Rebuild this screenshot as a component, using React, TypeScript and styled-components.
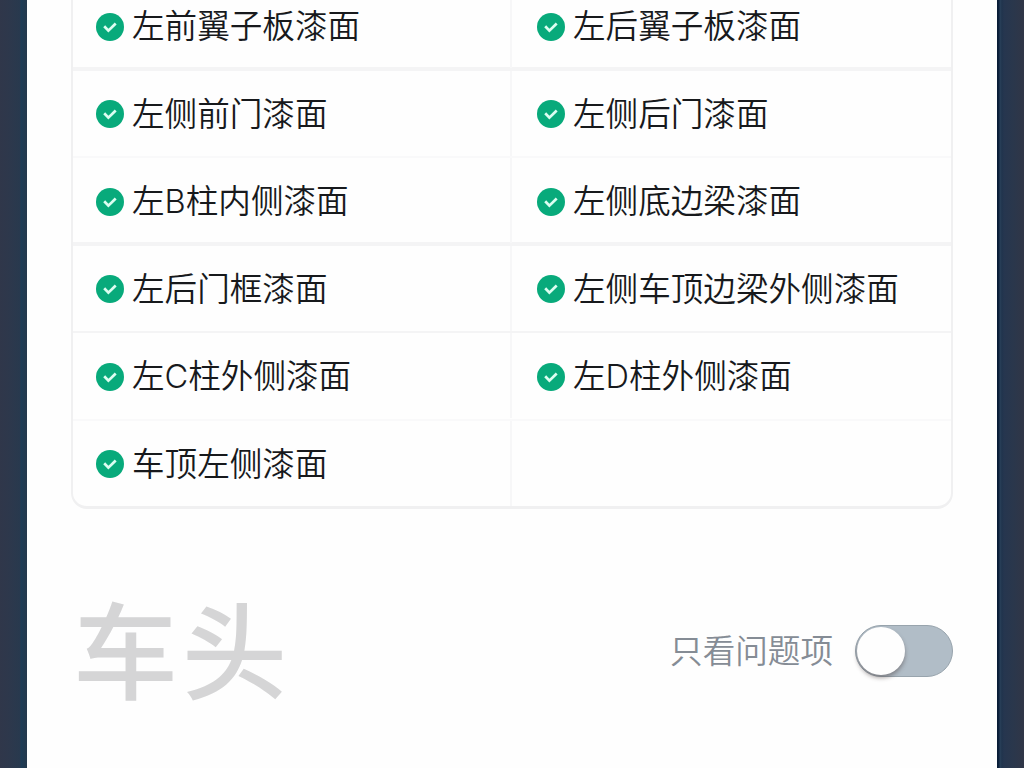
import styled, { createGlobalStyle, css } from 'styled-components'

type Item = {
  left: string
  right?: string
  divider?: 'thick' | 'thin' | 'faint'
}

const items: Item[] = [
  { left: '左前翼子板漆面', right: '左后翼子板漆面', divider: 'thick' },
  { left: '左侧前门漆面', right: '左侧后门漆面', divider: 'faint' },
  { left: '左B柱内侧漆面', right: '左侧底边梁漆面', divider: 'thick' },
  { left: '左后门框漆面', right: '左侧车顶边梁外侧漆面', divider: 'thin' },
  { left: '左C柱外侧漆面', right: '左D柱外侧漆面', divider: 'faint' },
  { left: '车顶左侧漆面' },
]

const Check = () => (
  <CheckIcon viewBox="0 0 28 28">
    <circle cx="14" cy="14" r="14" fill="#08aa7b" />
    <path d="M8.2 13.2l4.2 4.4 7.3-7.1" fill="none" stroke="#dcfdf1" strokeWidth="2.7" />
  </CheckIcon>
)

export default function App() {
  return (
    <Page>
      <GlobalStyle />
      <LeftEdge />
      <Sheet>
        <Table>
          {items.map(item => (
            <Row key={item.left} divider={item.divider}>
              <Cell>
                <Check />
                <Label>{item.left}</Label>
              </Cell>
              <Cell>
                {item.right && (
                  <>
                    <Check />
                    <Label>{item.right}</Label>
                  </>
                )}
              </Cell>
            </Row>
          ))}
        </Table>
        <Footer>
          <Title>车头</Title>
          <Filter>
            <FilterLabel>只看问题项</FilterLabel>
            <Switch role="switch" aria-checked="false">
              <Thumb />
            </Switch>
          </Filter>
        </Footer>
      </Sheet>
      <RightEdge />
    </Page>
  )
}

const GlobalStyle = createGlobalStyle`
  * {
    box-sizing: border-box;
  }
  body {
    margin: 0;
    overflow: hidden;
    font-family: Inter, 'Noto Sans CJK SC', sans-serif;
  }
`

const Page = styled.div`
  display: flex;
  width: 1024px;
  height: 768px;
  overflow: hidden;
  background: #fefefe;
`
const LeftEdge = styled.div`
  width: 27px;
  flex-shrink: 0;
  background: linear-gradient(90deg, #30374a 0, #2d384c 10px, #28394e 20px, #1d3c56 21px, #24394c 27px);
`
const RightEdge = styled.div`
  width: 27px;
  flex-shrink: 0;
  background: linear-gradient(90deg, #071a33 0, #0d2340 2px, #294059 3px, #20344d 5px, #26364f 7px, #2a374c 16px, #303647 27px);
`
const Sheet = styled.div`
  flex: 1;
  padding: 0 44px;
`
const Table = styled.div`
  margin-top: -19px;
  height: 528px;
  display: flex;
  flex-direction: column;
  border: 2px solid #f0f0f1;
  border-bottom-width: 3px;
  border-radius: 16px;
`

const Row = styled.div<{ divider?: Item['divider'] }>`
  display: flex;
  height: 87.6px;
  flex-shrink: 0;

  &:last-child {
    height: 85px;
  }

  ${props =>
    props.divider === 'thick' &&
    css`
      border-bottom: 4px solid #f4f4f5;
    `}

  ${props =>
    props.divider === 'thin' &&
    css`
      border-bottom: 2px solid #f4f4f5;
    `}

  ${props =>
    props.divider === 'faint' &&
    css`
      border-bottom: 2px solid #f9f9fa;
    `}
`
const Cell = styled.div`
  width: 437px;
  height: 85px;
  display: flex;
  align-items: center;
  gap: 8px;
  padding: 2px 0 0 23px;

  & + & {
    width: auto;
    flex: 1;
    border-left: 2px solid #f7f7f8;
    padding-left: 25px;
  }
`
const CheckIcon = styled.svg`
  width: 28px;
  height: 28px;
  flex-shrink: 0;
`
const Label = styled.span`
  color: #17191c;
  font-size: 32.6px;
  font-weight: 350;
  line-height: 46px;
  padding-bottom: 1px;
  white-space: nowrap;
`
const Footer = styled.div`
  display: flex;
  align-items: center;
  justify-content: space-between;
  margin-top: 82px;
  height: 120px;
`
const Title = styled.h2`
  margin: 0;
  padding: 4px 0 0 2px;
  color: #d5d5d6;
  font-size: 105px;
  font-weight: 500;
  letter-spacing: 4px;
  line-height: 120px;
`
const Filter = styled.div`
  display: flex;
  align-items: center;
  gap: 22px;
`
const FilterLabel = styled.span`
  color: #858c95;
  font-size: 32.6px;
  font-weight: 350;
  line-height: 48px;
`
const Switch = styled.div`
  display: flex;
  width: 98px;
  height: 52px;
  padding: 1px;
  border: 1px solid #98a4ad;
  border-radius: 26px;
  background: #b1bdc7;
`
const Thumb = styled.div`
  width: 48px;
  height: 48px;
  border-radius: 50%;
  background: #fefefe;
  box-shadow: 0 3px 4px rgba(70, 60, 60, 0.45);
`
